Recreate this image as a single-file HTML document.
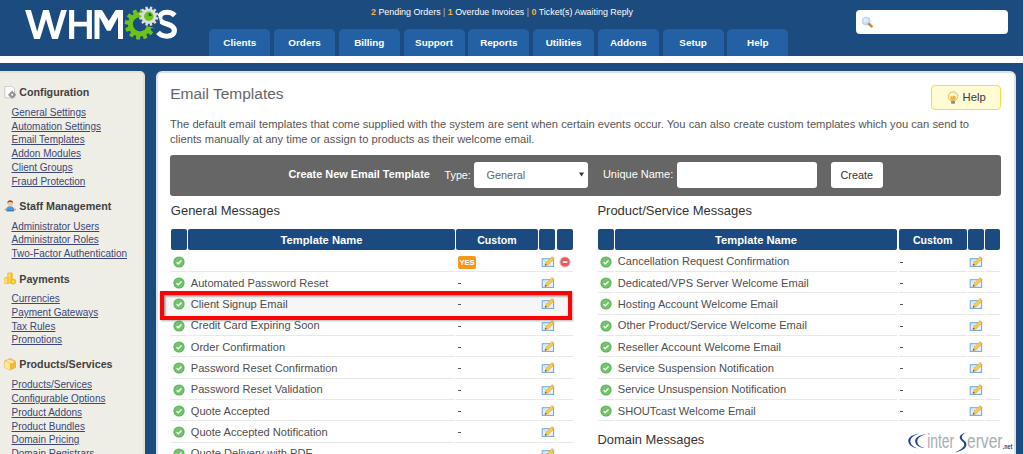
<!DOCTYPE html>
<html><head><meta charset="utf-8"><style>
html,body{margin:0;padding:0;width:1024px;height:454px;overflow:hidden;font-family:"Liberation Sans", sans-serif;}
body{position:relative;}
</style></head><body>
<div style="position:absolute;left:0.00px;top:0.00px;width:1024.00px;height:454.00px;background:#1c4b80"></div>
<div style="position:absolute;left:0.00px;top:55.70px;width:1024.00px;height:7.20px;background:#fff"></div>
<div style="position:absolute;left:1023.00px;top:0.00px;width:1.00px;height:454.00px;background:#c9d3de"></div>
<svg style="position:absolute;left:0;top:0" width="130" height="45" viewBox="0 0 130 45">
<path d="M25.1 9.9 L30.9 9.9 L37.2 31.8 L43.1 9.9 L48.9 9.9 L54.8 31.8 L61.1 9.9 L66.9 9.9 L57.9 38.9 L52.1 38.9 L46 19.3 L39.9 38.9 L34.1 38.9Z" fill="#fff"/>
<path d="M69.1 9.9 H74.2 V21.7 H86.8 V9.9 H91.9 V38.9 H86.8 V26.4 H74.2 V38.9 H69.1Z" fill="#fff"/>
<path d="M94.5 38.9 V9.9 H101.9 L108.75 21 L115.6 9.9 H123 V38.9 H118 V17 L110.6 30.7 H106.9 L99.5 17 V38.9Z" fill="#fff"/>
</svg>
<svg style="position:absolute;left:0;top:0" width="200" height="45" viewBox="0 0 200 45"><path d="M174.8 15.4 C172.8 13.3 170 12.3 166.8 12.3 C162.3 12.3 159.7 14.7 159.7 17.9 C159.7 21.6 163 22.8 167 24 C171.4 25.3 174.4 26.8 174.4 30.6 C174.4 34 171.4 36.2 166.8 36.2 C163.2 36.2 160.3 35 158 32.4" fill="none" stroke="#fff" stroke-width="5.1"/></svg>
<svg style="position:absolute;left:0;top:0" width="200" height="50" viewBox="0 0 200 50">
<path d="M151.99,23.84 L155.40,24.52 L154.86,28.34 L151.40,28.05 L150.61,29.90 L153.23,32.19 L150.85,35.23 L148.00,33.25 L146.39,34.45 L147.51,37.74 L143.93,39.19 L142.45,36.05 L140.46,36.29 L139.78,39.70 L135.96,39.16 L136.25,35.70 L134.40,34.91 L132.11,37.53 L129.07,35.15 L131.05,32.30 L129.85,30.69 L126.56,31.81 L125.11,28.23 L128.25,26.75 L128.01,24.76 L124.60,24.08 L125.14,20.26 L128.60,20.55 L129.39,18.70 L126.77,16.41 L129.15,13.37 L132.00,15.35 L133.61,14.15 L132.49,10.86 L136.07,9.41 L137.55,12.55 L139.54,12.31 L140.22,8.90 L144.04,9.44 L143.75,12.90 L145.60,13.69 L147.89,11.07 L150.93,13.45 L148.95,16.30 L150.15,17.91 L153.44,16.79 L154.89,20.37 L151.75,21.85Z" fill="#6dc21c"/>
<circle cx="140" cy="24.3" r="7.1" fill="#1c4b80"/>
<path d="M140.00,24.30 L143.47,4.60 L146.12,5.26 L148.66,6.27 L151.04,7.62 L153.21,9.28 L155.13,11.22 L156.77,13.41 L158.10,15.79 L159.09,18.34 L159.73,21.00 L159.99,23.72 L159.88,26.45 L159.41,29.14Z" fill="#1c4b80"/>
<path d="M156.37,16.88 L158.50,17.58 L157.89,19.86 L155.69,19.40 L155.02,20.57 L156.51,22.25 L154.85,23.91 L153.17,22.42 L152.00,23.09 L152.46,25.29 L150.18,25.90 L149.48,23.77 L148.12,23.77 L147.42,25.90 L145.14,25.29 L145.60,23.09 L144.43,22.42 L142.75,23.91 L141.09,22.25 L142.58,20.57 L141.91,19.40 L139.71,19.86 L139.10,17.58 L141.23,16.88 L141.23,15.52 L139.10,14.82 L139.71,12.54 L141.91,13.00 L142.58,11.83 L141.09,10.15 L142.75,8.49 L144.43,9.98 L145.60,9.31 L145.14,7.11 L147.42,6.50 L148.12,8.63 L149.48,8.63 L150.18,6.50 L152.46,7.11 L152.00,9.31 L153.17,9.98 L154.85,8.49 L156.51,10.15 L155.02,11.83 L155.69,13.00 L157.89,12.54 L158.50,14.82 L156.37,15.52Z" fill="#dcdcdc"/>
<circle cx="148.8" cy="16.2" r="4.7" fill="#6dc21c"/>
<path d="M148.80,16.20 L148.54,13.21 L148.91,13.20 L149.28,13.24 L149.64,13.32 L149.99,13.45 L150.32,13.61 L150.63,13.82 L150.91,14.06 L151.15,14.34 L151.36,14.64 L151.54,14.97 L151.67,15.32 L151.75,15.68Z" fill="#1c4b80"/>
</svg>
<div style="position:absolute;left:371.00px;top:7.77px;font-size:8.9px;line-height:8.9px;color:#fff;font-weight:normal;white-space:nowrap;"><b style="color:#f3b13a">2</b> Pending Orders <span style="color:#a9bbd3">|</span> <b style="color:#f3b13a">1</b> Overdue Invoices <span style="color:#a9bbd3">|</span> <b style="color:#f3b13a">0</b> Ticket(s) Awaiting Reply</div>
<div style="position:absolute;left:209.30px;top:28.80px;width:61.00px;height:27.00px;background:#2461a4;border-radius:5px 5px 0 0"></div>
<div style="position:absolute;left:209.30px;top:38.22px;width:61.00px;text-align:center;font-size:9.9px;line-height:9.9px;color:#fff;font-weight:bold;white-space:nowrap;">Clients</div>
<div style="position:absolute;left:274.05px;top:28.80px;width:61.00px;height:27.00px;background:#2461a4;border-radius:5px 5px 0 0"></div>
<div style="position:absolute;left:274.05px;top:38.22px;width:61.00px;text-align:center;font-size:9.9px;line-height:9.9px;color:#fff;font-weight:bold;white-space:nowrap;">Orders</div>
<div style="position:absolute;left:338.80px;top:28.80px;width:61.00px;height:27.00px;background:#2461a4;border-radius:5px 5px 0 0"></div>
<div style="position:absolute;left:338.80px;top:38.22px;width:61.00px;text-align:center;font-size:9.9px;line-height:9.9px;color:#fff;font-weight:bold;white-space:nowrap;">Billing</div>
<div style="position:absolute;left:403.55px;top:28.80px;width:61.00px;height:27.00px;background:#2461a4;border-radius:5px 5px 0 0"></div>
<div style="position:absolute;left:403.55px;top:38.22px;width:61.00px;text-align:center;font-size:9.9px;line-height:9.9px;color:#fff;font-weight:bold;white-space:nowrap;">Support</div>
<div style="position:absolute;left:468.30px;top:28.80px;width:61.00px;height:27.00px;background:#2461a4;border-radius:5px 5px 0 0"></div>
<div style="position:absolute;left:468.30px;top:38.22px;width:61.00px;text-align:center;font-size:9.9px;line-height:9.9px;color:#fff;font-weight:bold;white-space:nowrap;">Reports</div>
<div style="position:absolute;left:533.05px;top:28.80px;width:61.00px;height:27.00px;background:#2461a4;border-radius:5px 5px 0 0"></div>
<div style="position:absolute;left:533.05px;top:38.22px;width:61.00px;text-align:center;font-size:9.9px;line-height:9.9px;color:#fff;font-weight:bold;white-space:nowrap;">Utilities</div>
<div style="position:absolute;left:597.80px;top:28.80px;width:61.00px;height:27.00px;background:#2461a4;border-radius:5px 5px 0 0"></div>
<div style="position:absolute;left:597.80px;top:38.22px;width:61.00px;text-align:center;font-size:9.9px;line-height:9.9px;color:#fff;font-weight:bold;white-space:nowrap;">Addons</div>
<div style="position:absolute;left:662.55px;top:28.80px;width:61.00px;height:27.00px;background:#2461a4;border-radius:5px 5px 0 0"></div>
<div style="position:absolute;left:662.55px;top:38.22px;width:61.00px;text-align:center;font-size:9.9px;line-height:9.9px;color:#fff;font-weight:bold;white-space:nowrap;">Setup</div>
<div style="position:absolute;left:727.30px;top:28.80px;width:61.00px;height:27.00px;background:#2461a4;border-radius:5px 5px 0 0"></div>
<div style="position:absolute;left:727.30px;top:38.22px;width:61.00px;text-align:center;font-size:9.9px;line-height:9.9px;color:#fff;font-weight:bold;white-space:nowrap;">Help</div>
<div style="position:absolute;left:856.00px;top:10.00px;width:152.00px;height:24.00px;background:#fff;border-radius:4px"></div>
<svg style="position:absolute;left:861px;top:16px" width="14" height="13" viewBox="0 0 14 13">
<circle cx="5.2" cy="5" r="4" fill="#c9dff4" stroke="#b3cfea" stroke-width=".8"/>
<circle cx="4.4" cy="4.2" r="1.6" fill="#e3effa"/>
<path d="M8 8 L10.6 10.4" stroke="#c98945" stroke-width="2.6" stroke-linecap="round"/>
</svg>
<div style="position:absolute;left:-5.00px;top:71.00px;width:149.60px;height:400.00px;background:#efeee6;border:2px solid #e4e1cc;border-radius:5px;box-sizing:border-box"></div>
<div style="position:absolute;left:19.30px;top:87.34px;font-size:10.7px;line-height:10.7px;color:#404040;font-weight:bold;white-space:nowrap;">Configuration</div>
<svg style="position:absolute;left:4px;top:85.8px" width="13" height="13" viewBox="0 0 13 13"><path d="M0.8 0.3h7.2l2.6 2.6v8.9H0.8z" fill="#fbfbfb" stroke="#c4c4c4" stroke-width=".9"/><g transform="translate(8.2 8.7)"><circle r="3" fill="#8f8f8f"/><path d="M-.7 -3.9h1.4v7.8h-1.4z M-3.9 -.7h7.8v1.4h-7.8z" fill="#8f8f8f"/><circle r="1.1" fill="#f4f4f4"/></g></svg>
<div style="position:absolute;left:11.50px;top:107.94px;font-size:10.0px;line-height:10.0px;color:#3b4679;font-weight:normal;white-space:nowrap;text-decoration:underline">General Settings</div>
<div style="position:absolute;left:11.50px;top:121.66px;font-size:10.0px;line-height:10.0px;color:#3b4679;font-weight:normal;white-space:nowrap;text-decoration:underline">Automation Settings</div>
<div style="position:absolute;left:11.50px;top:135.38px;font-size:10.0px;line-height:10.0px;color:#3b4679;font-weight:normal;white-space:nowrap;text-decoration:underline">Email Templates</div>
<div style="position:absolute;left:11.50px;top:149.09px;font-size:10.0px;line-height:10.0px;color:#3b4679;font-weight:normal;white-space:nowrap;text-decoration:underline">Addon Modules</div>
<div style="position:absolute;left:11.50px;top:162.81px;font-size:10.0px;line-height:10.0px;color:#3b4679;font-weight:normal;white-space:nowrap;text-decoration:underline">Client Groups</div>
<div style="position:absolute;left:11.50px;top:176.53px;font-size:10.0px;line-height:10.0px;color:#3b4679;font-weight:normal;white-space:nowrap;text-decoration:underline">Fraud Protection</div>
<div style="position:absolute;left:19.30px;top:201.24px;font-size:10.7px;line-height:10.7px;color:#404040;font-weight:bold;white-space:nowrap;">Staff Management</div>
<svg style="position:absolute;left:4px;top:199.7px" width="13" height="13" viewBox="0 0 13 13"><path d="M2.2 9.8 Q2.2 6.5 6.2 6.3 Q10.2 6.5 10.3 9.8 L10 11.3 H2.6z" fill="#4b97e2"/><path d="M2.6 10.2 H10 L9.8 11.3 H2.8z" fill="#2d6fc0"/><circle cx="1.5" cy="9.4" r="1" fill="#e8a53a"/><circle cx="11" cy="9.4" r="1" fill="#e8a53a"/><circle cx="6.2" cy="3.6" r="2.7" fill="#f3c79b"/><path d="M3.4 3.4 Q3.3 0.3 6.2 0.3 Q9.1 0.3 9 3.4 Q8 1.8 6.2 2 Q4.4 1.8 3.4 3.4z" fill="#9a4a1a"/></svg>
<div style="position:absolute;left:11.50px;top:221.63px;font-size:10.0px;line-height:10.0px;color:#3b4679;font-weight:normal;white-space:nowrap;text-decoration:underline">Administrator Users</div>
<div style="position:absolute;left:11.50px;top:235.35px;font-size:10.0px;line-height:10.0px;color:#3b4679;font-weight:normal;white-space:nowrap;text-decoration:underline">Administrator Roles</div>
<div style="position:absolute;left:11.50px;top:249.08px;font-size:10.0px;line-height:10.0px;color:#3b4679;font-weight:normal;white-space:nowrap;text-decoration:underline">Two-Factor Authentication</div>
<div style="position:absolute;left:19.30px;top:273.74px;font-size:10.7px;line-height:10.7px;color:#404040;font-weight:bold;white-space:nowrap;">Payments</div>
<svg style="position:absolute;left:4px;top:272.2px" width="13" height="13" viewBox="0 0 13 13"><rect x="3.3" y="0.5" width="5.5" height="11" rx="1.2" fill="#f4bd2a"/><rect x="4.3" y="1.3" width="2.2" height="9" fill="#fbd86a"/><rect x="0.2" y="5" width="4.6" height="7" rx="1.2" fill="#f7c534"/><rect x="1" y="6" width="1.8" height="5" fill="#fde08a"/><circle cx="9.3" cy="9.6" r="2.9" fill="#f5bd24"/><circle cx="9.3" cy="9.6" r="1.2" fill="#fde08a"/></svg>
<div style="position:absolute;left:11.50px;top:294.24px;font-size:10.0px;line-height:10.0px;color:#3b4679;font-weight:normal;white-space:nowrap;text-decoration:underline">Currencies</div>
<div style="position:absolute;left:11.50px;top:307.96px;font-size:10.0px;line-height:10.0px;color:#3b4679;font-weight:normal;white-space:nowrap;text-decoration:underline">Payment Gateways</div>
<div style="position:absolute;left:11.50px;top:321.68px;font-size:10.0px;line-height:10.0px;color:#3b4679;font-weight:normal;white-space:nowrap;text-decoration:underline">Tax Rules</div>
<div style="position:absolute;left:11.50px;top:335.40px;font-size:10.0px;line-height:10.0px;color:#3b4679;font-weight:normal;white-space:nowrap;text-decoration:underline">Promotions</div>
<div style="position:absolute;left:19.30px;top:359.24px;font-size:10.7px;line-height:10.7px;color:#404040;font-weight:bold;white-space:nowrap;">Products/Services</div>
<svg style="position:absolute;left:4px;top:357.7px" width="13" height="13" viewBox="0 0 13 13"><path d="M6 0.6 L11.5 3.2 V9.4 L6 12 L0.5 9.4 V3.2z" fill="#f8dd7a" stroke="#e3a64a" stroke-width=".9"/><path d="M0.5 3.2 L6 5.9 L11.5 3.2 V9.4 L6 12z" fill="#f2b932"/><path d="M0.5 3.2 L6 5.9 V12 L0.5 9.4z" fill="#fbe7a0"/><path d="M3.2 1.9 L8.8 4.6" stroke="#fff3c8" stroke-width="1"/></svg>
<div style="position:absolute;left:11.50px;top:380.34px;font-size:10.0px;line-height:10.0px;color:#3b4679;font-weight:normal;white-space:nowrap;text-decoration:underline">Products/Services</div>
<div style="position:absolute;left:11.50px;top:394.06px;font-size:10.0px;line-height:10.0px;color:#3b4679;font-weight:normal;white-space:nowrap;text-decoration:underline">Configurable Options</div>
<div style="position:absolute;left:11.50px;top:407.78px;font-size:10.0px;line-height:10.0px;color:#3b4679;font-weight:normal;white-space:nowrap;text-decoration:underline">Product Addons</div>
<div style="position:absolute;left:11.50px;top:421.50px;font-size:10.0px;line-height:10.0px;color:#3b4679;font-weight:normal;white-space:nowrap;text-decoration:underline">Product Bundles</div>
<div style="position:absolute;left:11.50px;top:435.22px;font-size:10.0px;line-height:10.0px;color:#3b4679;font-weight:normal;white-space:nowrap;text-decoration:underline">Domain Pricing</div>
<div style="position:absolute;left:11.50px;top:448.94px;font-size:10.0px;line-height:10.0px;color:#3b4679;font-weight:normal;white-space:nowrap;text-decoration:underline">Domain Registrars</div>
<div style="position:absolute;left:155.50px;top:71.00px;width:860.20px;height:420.00px;background:#fff;border:2px solid #dde2e8;border-radius:6px;box-sizing:border-box"></div>
<div style="position:absolute;left:170.20px;top:85.88px;font-size:15.5px;line-height:15.5px;color:#666;font-weight:normal;white-space:nowrap;">Email Templates</div>
<div style="position:absolute;left:931.00px;top:85.20px;width:70.00px;height:24.40px;background:#fffcd4;border:1px solid #f7dc48;border-radius:4px;box-sizing:border-box"></div>
<svg style="position:absolute;left:947px;top:91px" width="12" height="14" viewBox="0 0 12 14">
<circle cx="6" cy="5.5" r="4.7" fill="#fdf2c8" stroke="#e9b655" stroke-width=".9"/>
<ellipse cx="6" cy="7" rx="2.8" ry="2.4" fill="#f2b73a"/>
<circle cx="5.2" cy="3.8" r="1.6" fill="#fffbea"/>
<rect x="4" y="9.8" width="4" height="3" rx=".8" fill="#8d8d8d"/>
</svg>
<div style="position:absolute;left:962.50px;top:92.13px;font-size:11.3px;line-height:11.3px;color:#3a3a3a;font-weight:normal;white-space:nowrap;">Help</div>
<div style="position:absolute;left:170.00px;top:118.72px;font-size:11.2px;line-height:11.2px;color:#555;font-weight:normal;white-space:nowrap;">The default email templates that come supplied with the system are sent when certain events occur. You can also create custom templates which you can send to</div>
<div style="position:absolute;left:170.00px;top:134.02px;font-size:11.2px;line-height:11.2px;color:#555;font-weight:normal;white-space:nowrap;">clients manually at any time or assign to products as their welcome email.</div>
<div style="position:absolute;left:170.00px;top:154.60px;width:831.00px;height:41.00px;background:#666;border-radius:3px"></div>
<div style="position:absolute;left:288.40px;top:169.37px;font-size:10.9px;line-height:10.9px;color:#fff;font-weight:bold;white-space:nowrap;">Create New Email Template</div>
<div style="position:absolute;left:444.60px;top:169.54px;font-size:10.7px;line-height:10.7px;color:#fff;font-weight:normal;white-space:nowrap;">Type:</div>
<div style="position:absolute;left:474.00px;top:162.30px;width:114.00px;height:25.70px;background:#fff;border-radius:3px"></div>
<div style="position:absolute;left:486.50px;top:169.77px;font-size:10.9px;line-height:10.9px;color:#666;font-weight:normal;white-space:nowrap;">General</div>
<svg style="position:absolute;left:579px;top:172px" width="5" height="5" viewBox="0 0 5 5"><path d="M0 .5H5L2.5 4.5z" fill="#333"/></svg>
<div style="position:absolute;left:602.90px;top:169.29px;font-size:11.0px;line-height:11.0px;color:#fff;font-weight:normal;white-space:nowrap;">Unique Name:</div>
<div style="position:absolute;left:677.00px;top:162.30px;width:139.70px;height:25.70px;background:#fff;border-radius:3px"></div>
<div style="position:absolute;left:830.50px;top:162.30px;width:52.50px;height:25.70px;background:#fff;border-radius:3px"></div>
<div style="position:absolute;left:840.50px;top:169.86px;font-size:10.8px;line-height:10.8px;color:#333;font-weight:normal;white-space:nowrap;">Create</div>
<div style="position:absolute;left:164.10px;top:294.30px;width:404.40px;height:21.60px;background:#f6f6f6"></div>
<div style="position:absolute;left:170.80px;top:204.20px;font-size:13.0px;line-height:13.0px;color:#333;font-weight:normal;white-space:nowrap;">General Messages</div>
<div style="position:absolute;left:170.80px;top:229.20px;width:16.00px;height:20.80px;background:#1a4a80;border-radius:2px"></div>
<div style="position:absolute;left:188.10px;top:229.20px;width:266.80px;height:20.80px;background:#1a4a80;border-radius:2px"></div>
<div style="position:absolute;left:456.00px;top:229.20px;width:81.80px;height:20.80px;background:#1a4a80;border-radius:2px"></div>
<div style="position:absolute;left:539.10px;top:229.20px;width:16.20px;height:20.80px;background:#1a4a80;border-radius:2px"></div>
<div style="position:absolute;left:557.00px;top:229.20px;width:16.00px;height:20.80px;background:#1a4a80;border-radius:2px"></div>
<div style="position:absolute;left:188.10px;top:235.02px;width:266.80px;text-align:center;font-size:11.2px;line-height:11.2px;color:#fff;font-weight:bold;white-space:nowrap;">Template Name</div>
<div style="position:absolute;left:456.00px;top:235.03px;width:81.80px;text-align:center;font-size:10.6px;line-height:10.6px;color:#fff;font-weight:bold;white-space:nowrap;">Custom</div>
<div style="position:absolute;left:170.80px;top:271.00px;width:16.00px;height:1.00px;background:#e8e8e8"></div>
<div style="position:absolute;left:188.10px;top:271.00px;width:266.80px;height:1.00px;background:#e8e8e8"></div>
<div style="position:absolute;left:456.00px;top:271.00px;width:81.80px;height:1.00px;background:#e8e8e8"></div>
<div style="position:absolute;left:539.10px;top:271.00px;width:16.20px;height:1.00px;background:#e8e8e8"></div>
<div style="position:absolute;left:557.00px;top:271.00px;width:16.00px;height:1.00px;background:#e8e8e8"></div>
<svg style="position:absolute;left:173.10px;top:255.80px" width="12" height="12" viewBox="0 0 12 12"><circle cx="6" cy="6" r="5.6" fill="#58b055"/><circle cx="6" cy="6" r="4.7" fill="#72c46c"/><path d="M3.6 6.3 L5.3 7.8 L8.5 4.6" fill="none" stroke="#fff" stroke-width="1.4"/></svg>
<div style="position:absolute;left:458.20px;top:255.90px;width:17.60px;height:12.90px;background:#f7971d;border-radius:2px"></div>
<div style="position:absolute;left:458.20px;top:259.17px;width:17.60px;text-align:center;font-size:7.6px;line-height:7.6px;color:#fff;font-weight:bold;white-space:nowrap;letter-spacing:-0.1px">YES</div>
<svg style="position:absolute;left:540.50px;top:255.80px" width="14" height="13" viewBox="0 0 14 13"><rect x="1.2" y="2.7" width="11.4" height="7.7" fill="#e4f1fc" stroke="#6ea3da" stroke-width="1"/><path d="M1.5 3 L6.9 7.3 L12.3 3" fill="none" stroke="#a9cdf0" stroke-width=".7"/><path d="M3.9 9.6 L4.9 6.6 L10.6 1 L12.8 3.1 L7.1 8.7z" fill="#f4cf4c" stroke="#d59a32" stroke-width=".6"/><path d="M10.6 1 L11.4 0.3 L13.5 2.4 L12.8 3.1z" fill="#f0a878"/><path d="M3.9 9.6 L4.5 7.8 L5.8 9z" fill="#6b3a18"/></svg>
<svg style="position:absolute;left:559.00px;top:255.80px" width="12" height="12" viewBox="0 0 12 12"><circle cx="6" cy="6" r="5.1" fill="#e65a5c" stroke="#f4bcbc" stroke-width="1"/><rect x="3.7" y="5.2" width="4.6" height="1.7" fill="#fff"/></svg>
<div style="position:absolute;left:170.80px;top:292.00px;width:16.00px;height:1.00px;background:#e8e8e8"></div>
<div style="position:absolute;left:188.10px;top:292.00px;width:266.80px;height:1.00px;background:#e8e8e8"></div>
<div style="position:absolute;left:456.00px;top:292.00px;width:81.80px;height:1.00px;background:#e8e8e8"></div>
<div style="position:absolute;left:539.10px;top:292.00px;width:16.20px;height:1.00px;background:#e8e8e8"></div>
<div style="position:absolute;left:557.00px;top:292.00px;width:16.00px;height:1.00px;background:#e8e8e8"></div>
<svg style="position:absolute;left:173.10px;top:277.13px" width="12" height="12" viewBox="0 0 12 12"><circle cx="6" cy="6" r="5.6" fill="#58b055"/><circle cx="6" cy="6" r="4.7" fill="#72c46c"/><path d="M3.6 6.3 L5.3 7.8 L8.5 4.6" fill="none" stroke="#fff" stroke-width="1.4"/></svg>
<div style="position:absolute;left:190.80px;top:277.53px;font-size:11.1px;line-height:11.1px;color:#4e4e4e;font-weight:normal;white-space:nowrap;">Automated Password Reset</div>
<div style="position:absolute;left:458.00px;top:283.00px;width:3.00px;height:1.00px;background:#555"></div>
<svg style="position:absolute;left:540.50px;top:277.13px" width="14" height="13" viewBox="0 0 14 13"><rect x="1.2" y="2.7" width="11.4" height="7.7" fill="#e4f1fc" stroke="#6ea3da" stroke-width="1"/><path d="M1.5 3 L6.9 7.3 L12.3 3" fill="none" stroke="#a9cdf0" stroke-width=".7"/><path d="M3.9 9.6 L4.9 6.6 L10.6 1 L12.8 3.1 L7.1 8.7z" fill="#f4cf4c" stroke="#d59a32" stroke-width=".6"/><path d="M10.6 1 L11.4 0.3 L13.5 2.4 L12.8 3.1z" fill="#f0a878"/><path d="M3.9 9.6 L4.5 7.8 L5.8 9z" fill="#6b3a18"/></svg>
<svg style="position:absolute;left:173.10px;top:298.46px" width="12" height="12" viewBox="0 0 12 12"><circle cx="6" cy="6" r="5.6" fill="#58b055"/><circle cx="6" cy="6" r="4.7" fill="#72c46c"/><path d="M3.6 6.3 L5.3 7.8 L8.5 4.6" fill="none" stroke="#fff" stroke-width="1.4"/></svg>
<div style="position:absolute;left:190.80px;top:298.86px;font-size:11.1px;line-height:11.1px;color:#4e4e4e;font-weight:normal;white-space:nowrap;">Client Signup Email</div>
<div style="position:absolute;left:458.00px;top:304.00px;width:3.00px;height:1.00px;background:#555"></div>
<svg style="position:absolute;left:540.50px;top:298.46px" width="14" height="13" viewBox="0 0 14 13"><rect x="1.2" y="2.7" width="11.4" height="7.7" fill="#e4f1fc" stroke="#6ea3da" stroke-width="1"/><path d="M1.5 3 L6.9 7.3 L12.3 3" fill="none" stroke="#a9cdf0" stroke-width=".7"/><path d="M3.9 9.6 L4.9 6.6 L10.6 1 L12.8 3.1 L7.1 8.7z" fill="#f4cf4c" stroke="#d59a32" stroke-width=".6"/><path d="M10.6 1 L11.4 0.3 L13.5 2.4 L12.8 3.1z" fill="#f0a878"/><path d="M3.9 9.6 L4.5 7.8 L5.8 9z" fill="#6b3a18"/></svg>
<div style="position:absolute;left:170.80px;top:335.00px;width:16.00px;height:1.00px;background:#e8e8e8"></div>
<div style="position:absolute;left:188.10px;top:335.00px;width:266.80px;height:1.00px;background:#e8e8e8"></div>
<div style="position:absolute;left:456.00px;top:335.00px;width:81.80px;height:1.00px;background:#e8e8e8"></div>
<div style="position:absolute;left:539.10px;top:335.00px;width:16.20px;height:1.00px;background:#e8e8e8"></div>
<div style="position:absolute;left:557.00px;top:335.00px;width:16.00px;height:1.00px;background:#e8e8e8"></div>
<svg style="position:absolute;left:173.10px;top:319.79px" width="12" height="12" viewBox="0 0 12 12"><circle cx="6" cy="6" r="5.6" fill="#58b055"/><circle cx="6" cy="6" r="4.7" fill="#72c46c"/><path d="M3.6 6.3 L5.3 7.8 L8.5 4.6" fill="none" stroke="#fff" stroke-width="1.4"/></svg>
<div style="position:absolute;left:190.80px;top:320.19px;font-size:11.1px;line-height:11.1px;color:#4e4e4e;font-weight:normal;white-space:nowrap;">Credit Card Expiring Soon</div>
<div style="position:absolute;left:458.00px;top:326.00px;width:3.00px;height:1.00px;background:#555"></div>
<svg style="position:absolute;left:540.50px;top:319.79px" width="14" height="13" viewBox="0 0 14 13"><rect x="1.2" y="2.7" width="11.4" height="7.7" fill="#e4f1fc" stroke="#6ea3da" stroke-width="1"/><path d="M1.5 3 L6.9 7.3 L12.3 3" fill="none" stroke="#a9cdf0" stroke-width=".7"/><path d="M3.9 9.6 L4.9 6.6 L10.6 1 L12.8 3.1 L7.1 8.7z" fill="#f4cf4c" stroke="#d59a32" stroke-width=".6"/><path d="M10.6 1 L11.4 0.3 L13.5 2.4 L12.8 3.1z" fill="#f0a878"/><path d="M3.9 9.6 L4.5 7.8 L5.8 9z" fill="#6b3a18"/></svg>
<div style="position:absolute;left:170.80px;top:356.00px;width:16.00px;height:1.00px;background:#e8e8e8"></div>
<div style="position:absolute;left:188.10px;top:356.00px;width:266.80px;height:1.00px;background:#e8e8e8"></div>
<div style="position:absolute;left:456.00px;top:356.00px;width:81.80px;height:1.00px;background:#e8e8e8"></div>
<div style="position:absolute;left:539.10px;top:356.00px;width:16.20px;height:1.00px;background:#e8e8e8"></div>
<div style="position:absolute;left:557.00px;top:356.00px;width:16.00px;height:1.00px;background:#e8e8e8"></div>
<svg style="position:absolute;left:173.10px;top:341.12px" width="12" height="12" viewBox="0 0 12 12"><circle cx="6" cy="6" r="5.6" fill="#58b055"/><circle cx="6" cy="6" r="4.7" fill="#72c46c"/><path d="M3.6 6.3 L5.3 7.8 L8.5 4.6" fill="none" stroke="#fff" stroke-width="1.4"/></svg>
<div style="position:absolute;left:190.80px;top:341.52px;font-size:11.1px;line-height:11.1px;color:#4e4e4e;font-weight:normal;white-space:nowrap;">Order Confirmation</div>
<div style="position:absolute;left:458.00px;top:347.00px;width:3.00px;height:1.00px;background:#555"></div>
<svg style="position:absolute;left:540.50px;top:341.12px" width="14" height="13" viewBox="0 0 14 13"><rect x="1.2" y="2.7" width="11.4" height="7.7" fill="#e4f1fc" stroke="#6ea3da" stroke-width="1"/><path d="M1.5 3 L6.9 7.3 L12.3 3" fill="none" stroke="#a9cdf0" stroke-width=".7"/><path d="M3.9 9.6 L4.9 6.6 L10.6 1 L12.8 3.1 L7.1 8.7z" fill="#f4cf4c" stroke="#d59a32" stroke-width=".6"/><path d="M10.6 1 L11.4 0.3 L13.5 2.4 L12.8 3.1z" fill="#f0a878"/><path d="M3.9 9.6 L4.5 7.8 L5.8 9z" fill="#6b3a18"/></svg>
<div style="position:absolute;left:170.80px;top:378.00px;width:16.00px;height:1.00px;background:#e8e8e8"></div>
<div style="position:absolute;left:188.10px;top:378.00px;width:266.80px;height:1.00px;background:#e8e8e8"></div>
<div style="position:absolute;left:456.00px;top:378.00px;width:81.80px;height:1.00px;background:#e8e8e8"></div>
<div style="position:absolute;left:539.10px;top:378.00px;width:16.20px;height:1.00px;background:#e8e8e8"></div>
<div style="position:absolute;left:557.00px;top:378.00px;width:16.00px;height:1.00px;background:#e8e8e8"></div>
<svg style="position:absolute;left:173.10px;top:362.45px" width="12" height="12" viewBox="0 0 12 12"><circle cx="6" cy="6" r="5.6" fill="#58b055"/><circle cx="6" cy="6" r="4.7" fill="#72c46c"/><path d="M3.6 6.3 L5.3 7.8 L8.5 4.6" fill="none" stroke="#fff" stroke-width="1.4"/></svg>
<div style="position:absolute;left:190.80px;top:362.85px;font-size:11.1px;line-height:11.1px;color:#4e4e4e;font-weight:normal;white-space:nowrap;">Password Reset Confirmation</div>
<div style="position:absolute;left:458.00px;top:368.00px;width:3.00px;height:1.00px;background:#555"></div>
<svg style="position:absolute;left:540.50px;top:362.45px" width="14" height="13" viewBox="0 0 14 13"><rect x="1.2" y="2.7" width="11.4" height="7.7" fill="#e4f1fc" stroke="#6ea3da" stroke-width="1"/><path d="M1.5 3 L6.9 7.3 L12.3 3" fill="none" stroke="#a9cdf0" stroke-width=".7"/><path d="M3.9 9.6 L4.9 6.6 L10.6 1 L12.8 3.1 L7.1 8.7z" fill="#f4cf4c" stroke="#d59a32" stroke-width=".6"/><path d="M10.6 1 L11.4 0.3 L13.5 2.4 L12.8 3.1z" fill="#f0a878"/><path d="M3.9 9.6 L4.5 7.8 L5.8 9z" fill="#6b3a18"/></svg>
<div style="position:absolute;left:170.80px;top:399.00px;width:16.00px;height:1.00px;background:#e8e8e8"></div>
<div style="position:absolute;left:188.10px;top:399.00px;width:266.80px;height:1.00px;background:#e8e8e8"></div>
<div style="position:absolute;left:456.00px;top:399.00px;width:81.80px;height:1.00px;background:#e8e8e8"></div>
<div style="position:absolute;left:539.10px;top:399.00px;width:16.20px;height:1.00px;background:#e8e8e8"></div>
<div style="position:absolute;left:557.00px;top:399.00px;width:16.00px;height:1.00px;background:#e8e8e8"></div>
<svg style="position:absolute;left:173.10px;top:383.78px" width="12" height="12" viewBox="0 0 12 12"><circle cx="6" cy="6" r="5.6" fill="#58b055"/><circle cx="6" cy="6" r="4.7" fill="#72c46c"/><path d="M3.6 6.3 L5.3 7.8 L8.5 4.6" fill="none" stroke="#fff" stroke-width="1.4"/></svg>
<div style="position:absolute;left:190.80px;top:384.18px;font-size:11.1px;line-height:11.1px;color:#4e4e4e;font-weight:normal;white-space:nowrap;">Password Reset Validation</div>
<div style="position:absolute;left:458.00px;top:390.00px;width:3.00px;height:1.00px;background:#555"></div>
<svg style="position:absolute;left:540.50px;top:383.78px" width="14" height="13" viewBox="0 0 14 13"><rect x="1.2" y="2.7" width="11.4" height="7.7" fill="#e4f1fc" stroke="#6ea3da" stroke-width="1"/><path d="M1.5 3 L6.9 7.3 L12.3 3" fill="none" stroke="#a9cdf0" stroke-width=".7"/><path d="M3.9 9.6 L4.9 6.6 L10.6 1 L12.8 3.1 L7.1 8.7z" fill="#f4cf4c" stroke="#d59a32" stroke-width=".6"/><path d="M10.6 1 L11.4 0.3 L13.5 2.4 L12.8 3.1z" fill="#f0a878"/><path d="M3.9 9.6 L4.5 7.8 L5.8 9z" fill="#6b3a18"/></svg>
<div style="position:absolute;left:170.80px;top:420.00px;width:16.00px;height:1.00px;background:#e8e8e8"></div>
<div style="position:absolute;left:188.10px;top:420.00px;width:266.80px;height:1.00px;background:#e8e8e8"></div>
<div style="position:absolute;left:456.00px;top:420.00px;width:81.80px;height:1.00px;background:#e8e8e8"></div>
<div style="position:absolute;left:539.10px;top:420.00px;width:16.20px;height:1.00px;background:#e8e8e8"></div>
<div style="position:absolute;left:557.00px;top:420.00px;width:16.00px;height:1.00px;background:#e8e8e8"></div>
<svg style="position:absolute;left:173.10px;top:405.11px" width="12" height="12" viewBox="0 0 12 12"><circle cx="6" cy="6" r="5.6" fill="#58b055"/><circle cx="6" cy="6" r="4.7" fill="#72c46c"/><path d="M3.6 6.3 L5.3 7.8 L8.5 4.6" fill="none" stroke="#fff" stroke-width="1.4"/></svg>
<div style="position:absolute;left:190.80px;top:405.51px;font-size:11.1px;line-height:11.1px;color:#4e4e4e;font-weight:normal;white-space:nowrap;">Quote Accepted</div>
<div style="position:absolute;left:458.00px;top:411.00px;width:3.00px;height:1.00px;background:#555"></div>
<svg style="position:absolute;left:540.50px;top:405.11px" width="14" height="13" viewBox="0 0 14 13"><rect x="1.2" y="2.7" width="11.4" height="7.7" fill="#e4f1fc" stroke="#6ea3da" stroke-width="1"/><path d="M1.5 3 L6.9 7.3 L12.3 3" fill="none" stroke="#a9cdf0" stroke-width=".7"/><path d="M3.9 9.6 L4.9 6.6 L10.6 1 L12.8 3.1 L7.1 8.7z" fill="#f4cf4c" stroke="#d59a32" stroke-width=".6"/><path d="M10.6 1 L11.4 0.3 L13.5 2.4 L12.8 3.1z" fill="#f0a878"/><path d="M3.9 9.6 L4.5 7.8 L5.8 9z" fill="#6b3a18"/></svg>
<div style="position:absolute;left:170.80px;top:442.00px;width:16.00px;height:1.00px;background:#e8e8e8"></div>
<div style="position:absolute;left:188.10px;top:442.00px;width:266.80px;height:1.00px;background:#e8e8e8"></div>
<div style="position:absolute;left:456.00px;top:442.00px;width:81.80px;height:1.00px;background:#e8e8e8"></div>
<div style="position:absolute;left:539.10px;top:442.00px;width:16.20px;height:1.00px;background:#e8e8e8"></div>
<div style="position:absolute;left:557.00px;top:442.00px;width:16.00px;height:1.00px;background:#e8e8e8"></div>
<svg style="position:absolute;left:173.10px;top:426.44px" width="12" height="12" viewBox="0 0 12 12"><circle cx="6" cy="6" r="5.6" fill="#58b055"/><circle cx="6" cy="6" r="4.7" fill="#72c46c"/><path d="M3.6 6.3 L5.3 7.8 L8.5 4.6" fill="none" stroke="#fff" stroke-width="1.4"/></svg>
<div style="position:absolute;left:190.80px;top:426.84px;font-size:11.1px;line-height:11.1px;color:#4e4e4e;font-weight:normal;white-space:nowrap;">Quote Accepted Notification</div>
<div style="position:absolute;left:458.00px;top:432.00px;width:3.00px;height:1.00px;background:#555"></div>
<svg style="position:absolute;left:540.50px;top:426.44px" width="14" height="13" viewBox="0 0 14 13"><rect x="1.2" y="2.7" width="11.4" height="7.7" fill="#e4f1fc" stroke="#6ea3da" stroke-width="1"/><path d="M1.5 3 L6.9 7.3 L12.3 3" fill="none" stroke="#a9cdf0" stroke-width=".7"/><path d="M3.9 9.6 L4.9 6.6 L10.6 1 L12.8 3.1 L7.1 8.7z" fill="#f4cf4c" stroke="#d59a32" stroke-width=".6"/><path d="M10.6 1 L11.4 0.3 L13.5 2.4 L12.8 3.1z" fill="#f0a878"/><path d="M3.9 9.6 L4.5 7.8 L5.8 9z" fill="#6b3a18"/></svg>
<svg style="position:absolute;left:173.10px;top:447.77px" width="12" height="12" viewBox="0 0 12 12"><circle cx="6" cy="6" r="5.6" fill="#58b055"/><circle cx="6" cy="6" r="4.7" fill="#72c46c"/><path d="M3.6 6.3 L5.3 7.8 L8.5 4.6" fill="none" stroke="#fff" stroke-width="1.4"/></svg>
<div style="position:absolute;left:190.80px;top:448.17px;font-size:11.1px;line-height:11.1px;color:#4e4e4e;font-weight:normal;white-space:nowrap;">Quote Delivery with PDF</div>
<div style="position:absolute;left:458.00px;top:454.00px;width:3.00px;height:1.00px;background:#555"></div>
<svg style="position:absolute;left:540.50px;top:447.77px" width="14" height="13" viewBox="0 0 14 13"><rect x="1.2" y="2.7" width="11.4" height="7.7" fill="#e4f1fc" stroke="#6ea3da" stroke-width="1"/><path d="M1.5 3 L6.9 7.3 L12.3 3" fill="none" stroke="#a9cdf0" stroke-width=".7"/><path d="M3.9 9.6 L4.9 6.6 L10.6 1 L12.8 3.1 L7.1 8.7z" fill="#f4cf4c" stroke="#d59a32" stroke-width=".6"/><path d="M10.6 1 L11.4 0.3 L13.5 2.4 L12.8 3.1z" fill="#f0a878"/><path d="M3.9 9.6 L4.5 7.8 L5.8 9z" fill="#6b3a18"/></svg>
<div style="position:absolute;left:160.00px;top:290.50px;width:412.30px;height:29.20px;border:4px solid #fa0505;box-sizing:border-box;box-shadow:inset 1.5px 1.5px 2px rgba(0,0,0,.4), 1px 1px 2px rgba(0,0,0,.3)"></div>
<div style="position:absolute;left:597.40px;top:204.20px;font-size:13.0px;line-height:13.0px;color:#333;font-weight:normal;white-space:nowrap;">Product/Service Messages</div>
<div style="position:absolute;left:597.80px;top:229.20px;width:16.20px;height:20.80px;background:#1a4a80;border-radius:2px"></div>
<div style="position:absolute;left:615.10px;top:229.20px;width:281.90px;height:20.80px;background:#1a4a80;border-radius:2px"></div>
<div style="position:absolute;left:898.70px;top:229.20px;width:68.00px;height:20.80px;background:#1a4a80;border-radius:2px"></div>
<div style="position:absolute;left:968.00px;top:229.20px;width:16.00px;height:20.80px;background:#1a4a80;border-radius:2px"></div>
<div style="position:absolute;left:985.20px;top:229.20px;width:14.80px;height:20.80px;background:#1a4a80;border-radius:2px"></div>
<div style="position:absolute;left:615.10px;top:235.02px;width:281.90px;text-align:center;font-size:11.2px;line-height:11.2px;color:#fff;font-weight:bold;white-space:nowrap;">Template Name</div>
<div style="position:absolute;left:898.70px;top:235.03px;width:68.00px;text-align:center;font-size:10.6px;line-height:10.6px;color:#fff;font-weight:bold;white-space:nowrap;">Custom</div>
<div style="position:absolute;left:597.80px;top:271.00px;width:16.20px;height:1.00px;background:#e8e8e8"></div>
<div style="position:absolute;left:615.10px;top:271.00px;width:281.90px;height:1.00px;background:#e8e8e8"></div>
<div style="position:absolute;left:898.70px;top:271.00px;width:68.00px;height:1.00px;background:#e8e8e8"></div>
<div style="position:absolute;left:968.00px;top:271.00px;width:16.00px;height:1.00px;background:#e8e8e8"></div>
<div style="position:absolute;left:985.20px;top:271.00px;width:14.80px;height:1.00px;background:#e8e8e8"></div>
<svg style="position:absolute;left:600.20px;top:255.80px" width="12" height="12" viewBox="0 0 12 12"><circle cx="6" cy="6" r="5.6" fill="#58b055"/><circle cx="6" cy="6" r="4.7" fill="#72c46c"/><path d="M3.6 6.3 L5.3 7.8 L8.5 4.6" fill="none" stroke="#fff" stroke-width="1.4"/></svg>
<div style="position:absolute;left:617.80px;top:256.20px;font-size:11.1px;line-height:11.1px;color:#4e4e4e;font-weight:normal;white-space:nowrap;">Cancellation Request Confirmation</div>
<div style="position:absolute;left:900.00px;top:262.00px;width:3.00px;height:1.00px;background:#555"></div>
<svg style="position:absolute;left:969.30px;top:255.80px" width="14" height="13" viewBox="0 0 14 13"><rect x="1.2" y="2.7" width="11.4" height="7.7" fill="#e4f1fc" stroke="#6ea3da" stroke-width="1"/><path d="M1.5 3 L6.9 7.3 L12.3 3" fill="none" stroke="#a9cdf0" stroke-width=".7"/><path d="M3.9 9.6 L4.9 6.6 L10.6 1 L12.8 3.1 L7.1 8.7z" fill="#f4cf4c" stroke="#d59a32" stroke-width=".6"/><path d="M10.6 1 L11.4 0.3 L13.5 2.4 L12.8 3.1z" fill="#f0a878"/><path d="M3.9 9.6 L4.5 7.8 L5.8 9z" fill="#6b3a18"/></svg>
<div style="position:absolute;left:597.80px;top:292.00px;width:16.20px;height:1.00px;background:#e8e8e8"></div>
<div style="position:absolute;left:615.10px;top:292.00px;width:281.90px;height:1.00px;background:#e8e8e8"></div>
<div style="position:absolute;left:898.70px;top:292.00px;width:68.00px;height:1.00px;background:#e8e8e8"></div>
<div style="position:absolute;left:968.00px;top:292.00px;width:16.00px;height:1.00px;background:#e8e8e8"></div>
<div style="position:absolute;left:985.20px;top:292.00px;width:14.80px;height:1.00px;background:#e8e8e8"></div>
<svg style="position:absolute;left:600.20px;top:277.13px" width="12" height="12" viewBox="0 0 12 12"><circle cx="6" cy="6" r="5.6" fill="#58b055"/><circle cx="6" cy="6" r="4.7" fill="#72c46c"/><path d="M3.6 6.3 L5.3 7.8 L8.5 4.6" fill="none" stroke="#fff" stroke-width="1.4"/></svg>
<div style="position:absolute;left:617.80px;top:277.53px;font-size:11.1px;line-height:11.1px;color:#4e4e4e;font-weight:normal;white-space:nowrap;">Dedicated/VPS Server Welcome Email</div>
<div style="position:absolute;left:900.00px;top:283.00px;width:3.00px;height:1.00px;background:#555"></div>
<svg style="position:absolute;left:969.30px;top:277.13px" width="14" height="13" viewBox="0 0 14 13"><rect x="1.2" y="2.7" width="11.4" height="7.7" fill="#e4f1fc" stroke="#6ea3da" stroke-width="1"/><path d="M1.5 3 L6.9 7.3 L12.3 3" fill="none" stroke="#a9cdf0" stroke-width=".7"/><path d="M3.9 9.6 L4.9 6.6 L10.6 1 L12.8 3.1 L7.1 8.7z" fill="#f4cf4c" stroke="#d59a32" stroke-width=".6"/><path d="M10.6 1 L11.4 0.3 L13.5 2.4 L12.8 3.1z" fill="#f0a878"/><path d="M3.9 9.6 L4.5 7.8 L5.8 9z" fill="#6b3a18"/></svg>
<div style="position:absolute;left:597.80px;top:314.00px;width:16.20px;height:1.00px;background:#e8e8e8"></div>
<div style="position:absolute;left:615.10px;top:314.00px;width:281.90px;height:1.00px;background:#e8e8e8"></div>
<div style="position:absolute;left:898.70px;top:314.00px;width:68.00px;height:1.00px;background:#e8e8e8"></div>
<div style="position:absolute;left:968.00px;top:314.00px;width:16.00px;height:1.00px;background:#e8e8e8"></div>
<div style="position:absolute;left:985.20px;top:314.00px;width:14.80px;height:1.00px;background:#e8e8e8"></div>
<svg style="position:absolute;left:600.20px;top:298.46px" width="12" height="12" viewBox="0 0 12 12"><circle cx="6" cy="6" r="5.6" fill="#58b055"/><circle cx="6" cy="6" r="4.7" fill="#72c46c"/><path d="M3.6 6.3 L5.3 7.8 L8.5 4.6" fill="none" stroke="#fff" stroke-width="1.4"/></svg>
<div style="position:absolute;left:617.80px;top:298.86px;font-size:11.1px;line-height:11.1px;color:#4e4e4e;font-weight:normal;white-space:nowrap;">Hosting Account Welcome Email</div>
<div style="position:absolute;left:900.00px;top:304.00px;width:3.00px;height:1.00px;background:#555"></div>
<svg style="position:absolute;left:969.30px;top:298.46px" width="14" height="13" viewBox="0 0 14 13"><rect x="1.2" y="2.7" width="11.4" height="7.7" fill="#e4f1fc" stroke="#6ea3da" stroke-width="1"/><path d="M1.5 3 L6.9 7.3 L12.3 3" fill="none" stroke="#a9cdf0" stroke-width=".7"/><path d="M3.9 9.6 L4.9 6.6 L10.6 1 L12.8 3.1 L7.1 8.7z" fill="#f4cf4c" stroke="#d59a32" stroke-width=".6"/><path d="M10.6 1 L11.4 0.3 L13.5 2.4 L12.8 3.1z" fill="#f0a878"/><path d="M3.9 9.6 L4.5 7.8 L5.8 9z" fill="#6b3a18"/></svg>
<div style="position:absolute;left:597.80px;top:335.00px;width:16.20px;height:1.00px;background:#e8e8e8"></div>
<div style="position:absolute;left:615.10px;top:335.00px;width:281.90px;height:1.00px;background:#e8e8e8"></div>
<div style="position:absolute;left:898.70px;top:335.00px;width:68.00px;height:1.00px;background:#e8e8e8"></div>
<div style="position:absolute;left:968.00px;top:335.00px;width:16.00px;height:1.00px;background:#e8e8e8"></div>
<div style="position:absolute;left:985.20px;top:335.00px;width:14.80px;height:1.00px;background:#e8e8e8"></div>
<svg style="position:absolute;left:600.20px;top:319.79px" width="12" height="12" viewBox="0 0 12 12"><circle cx="6" cy="6" r="5.6" fill="#58b055"/><circle cx="6" cy="6" r="4.7" fill="#72c46c"/><path d="M3.6 6.3 L5.3 7.8 L8.5 4.6" fill="none" stroke="#fff" stroke-width="1.4"/></svg>
<div style="position:absolute;left:617.80px;top:320.19px;font-size:11.1px;line-height:11.1px;color:#4e4e4e;font-weight:normal;white-space:nowrap;">Other Product/Service Welcome Email</div>
<div style="position:absolute;left:900.00px;top:326.00px;width:3.00px;height:1.00px;background:#555"></div>
<svg style="position:absolute;left:969.30px;top:319.79px" width="14" height="13" viewBox="0 0 14 13"><rect x="1.2" y="2.7" width="11.4" height="7.7" fill="#e4f1fc" stroke="#6ea3da" stroke-width="1"/><path d="M1.5 3 L6.9 7.3 L12.3 3" fill="none" stroke="#a9cdf0" stroke-width=".7"/><path d="M3.9 9.6 L4.9 6.6 L10.6 1 L12.8 3.1 L7.1 8.7z" fill="#f4cf4c" stroke="#d59a32" stroke-width=".6"/><path d="M10.6 1 L11.4 0.3 L13.5 2.4 L12.8 3.1z" fill="#f0a878"/><path d="M3.9 9.6 L4.5 7.8 L5.8 9z" fill="#6b3a18"/></svg>
<div style="position:absolute;left:597.80px;top:356.00px;width:16.20px;height:1.00px;background:#e8e8e8"></div>
<div style="position:absolute;left:615.10px;top:356.00px;width:281.90px;height:1.00px;background:#e8e8e8"></div>
<div style="position:absolute;left:898.70px;top:356.00px;width:68.00px;height:1.00px;background:#e8e8e8"></div>
<div style="position:absolute;left:968.00px;top:356.00px;width:16.00px;height:1.00px;background:#e8e8e8"></div>
<div style="position:absolute;left:985.20px;top:356.00px;width:14.80px;height:1.00px;background:#e8e8e8"></div>
<svg style="position:absolute;left:600.20px;top:341.12px" width="12" height="12" viewBox="0 0 12 12"><circle cx="6" cy="6" r="5.6" fill="#58b055"/><circle cx="6" cy="6" r="4.7" fill="#72c46c"/><path d="M3.6 6.3 L5.3 7.8 L8.5 4.6" fill="none" stroke="#fff" stroke-width="1.4"/></svg>
<div style="position:absolute;left:617.80px;top:341.52px;font-size:11.1px;line-height:11.1px;color:#4e4e4e;font-weight:normal;white-space:nowrap;">Reseller Account Welcome Email</div>
<div style="position:absolute;left:900.00px;top:347.00px;width:3.00px;height:1.00px;background:#555"></div>
<svg style="position:absolute;left:969.30px;top:341.12px" width="14" height="13" viewBox="0 0 14 13"><rect x="1.2" y="2.7" width="11.4" height="7.7" fill="#e4f1fc" stroke="#6ea3da" stroke-width="1"/><path d="M1.5 3 L6.9 7.3 L12.3 3" fill="none" stroke="#a9cdf0" stroke-width=".7"/><path d="M3.9 9.6 L4.9 6.6 L10.6 1 L12.8 3.1 L7.1 8.7z" fill="#f4cf4c" stroke="#d59a32" stroke-width=".6"/><path d="M10.6 1 L11.4 0.3 L13.5 2.4 L12.8 3.1z" fill="#f0a878"/><path d="M3.9 9.6 L4.5 7.8 L5.8 9z" fill="#6b3a18"/></svg>
<div style="position:absolute;left:597.80px;top:378.00px;width:16.20px;height:1.00px;background:#e8e8e8"></div>
<div style="position:absolute;left:615.10px;top:378.00px;width:281.90px;height:1.00px;background:#e8e8e8"></div>
<div style="position:absolute;left:898.70px;top:378.00px;width:68.00px;height:1.00px;background:#e8e8e8"></div>
<div style="position:absolute;left:968.00px;top:378.00px;width:16.00px;height:1.00px;background:#e8e8e8"></div>
<div style="position:absolute;left:985.20px;top:378.00px;width:14.80px;height:1.00px;background:#e8e8e8"></div>
<svg style="position:absolute;left:600.20px;top:362.45px" width="12" height="12" viewBox="0 0 12 12"><circle cx="6" cy="6" r="5.6" fill="#58b055"/><circle cx="6" cy="6" r="4.7" fill="#72c46c"/><path d="M3.6 6.3 L5.3 7.8 L8.5 4.6" fill="none" stroke="#fff" stroke-width="1.4"/></svg>
<div style="position:absolute;left:617.80px;top:362.85px;font-size:11.1px;line-height:11.1px;color:#4e4e4e;font-weight:normal;white-space:nowrap;">Service Suspension Notification</div>
<div style="position:absolute;left:900.00px;top:368.00px;width:3.00px;height:1.00px;background:#555"></div>
<svg style="position:absolute;left:969.30px;top:362.45px" width="14" height="13" viewBox="0 0 14 13"><rect x="1.2" y="2.7" width="11.4" height="7.7" fill="#e4f1fc" stroke="#6ea3da" stroke-width="1"/><path d="M1.5 3 L6.9 7.3 L12.3 3" fill="none" stroke="#a9cdf0" stroke-width=".7"/><path d="M3.9 9.6 L4.9 6.6 L10.6 1 L12.8 3.1 L7.1 8.7z" fill="#f4cf4c" stroke="#d59a32" stroke-width=".6"/><path d="M10.6 1 L11.4 0.3 L13.5 2.4 L12.8 3.1z" fill="#f0a878"/><path d="M3.9 9.6 L4.5 7.8 L5.8 9z" fill="#6b3a18"/></svg>
<div style="position:absolute;left:597.80px;top:399.00px;width:16.20px;height:1.00px;background:#e8e8e8"></div>
<div style="position:absolute;left:615.10px;top:399.00px;width:281.90px;height:1.00px;background:#e8e8e8"></div>
<div style="position:absolute;left:898.70px;top:399.00px;width:68.00px;height:1.00px;background:#e8e8e8"></div>
<div style="position:absolute;left:968.00px;top:399.00px;width:16.00px;height:1.00px;background:#e8e8e8"></div>
<div style="position:absolute;left:985.20px;top:399.00px;width:14.80px;height:1.00px;background:#e8e8e8"></div>
<svg style="position:absolute;left:600.20px;top:383.78px" width="12" height="12" viewBox="0 0 12 12"><circle cx="6" cy="6" r="5.6" fill="#58b055"/><circle cx="6" cy="6" r="4.7" fill="#72c46c"/><path d="M3.6 6.3 L5.3 7.8 L8.5 4.6" fill="none" stroke="#fff" stroke-width="1.4"/></svg>
<div style="position:absolute;left:617.80px;top:384.18px;font-size:11.1px;line-height:11.1px;color:#4e4e4e;font-weight:normal;white-space:nowrap;">Service Unsuspension Notification</div>
<div style="position:absolute;left:900.00px;top:390.00px;width:3.00px;height:1.00px;background:#555"></div>
<svg style="position:absolute;left:969.30px;top:383.78px" width="14" height="13" viewBox="0 0 14 13"><rect x="1.2" y="2.7" width="11.4" height="7.7" fill="#e4f1fc" stroke="#6ea3da" stroke-width="1"/><path d="M1.5 3 L6.9 7.3 L12.3 3" fill="none" stroke="#a9cdf0" stroke-width=".7"/><path d="M3.9 9.6 L4.9 6.6 L10.6 1 L12.8 3.1 L7.1 8.7z" fill="#f4cf4c" stroke="#d59a32" stroke-width=".6"/><path d="M10.6 1 L11.4 0.3 L13.5 2.4 L12.8 3.1z" fill="#f0a878"/><path d="M3.9 9.6 L4.5 7.8 L5.8 9z" fill="#6b3a18"/></svg>
<div style="position:absolute;left:597.80px;top:420.00px;width:16.20px;height:1.00px;background:#e8e8e8"></div>
<div style="position:absolute;left:615.10px;top:420.00px;width:281.90px;height:1.00px;background:#e8e8e8"></div>
<div style="position:absolute;left:898.70px;top:420.00px;width:68.00px;height:1.00px;background:#e8e8e8"></div>
<div style="position:absolute;left:968.00px;top:420.00px;width:16.00px;height:1.00px;background:#e8e8e8"></div>
<div style="position:absolute;left:985.20px;top:420.00px;width:14.80px;height:1.00px;background:#e8e8e8"></div>
<svg style="position:absolute;left:600.20px;top:405.11px" width="12" height="12" viewBox="0 0 12 12"><circle cx="6" cy="6" r="5.6" fill="#58b055"/><circle cx="6" cy="6" r="4.7" fill="#72c46c"/><path d="M3.6 6.3 L5.3 7.8 L8.5 4.6" fill="none" stroke="#fff" stroke-width="1.4"/></svg>
<div style="position:absolute;left:617.80px;top:405.51px;font-size:11.1px;line-height:11.1px;color:#4e4e4e;font-weight:normal;white-space:nowrap;">SHOUTcast Welcome Email</div>
<div style="position:absolute;left:900.00px;top:411.00px;width:3.00px;height:1.00px;background:#555"></div>
<svg style="position:absolute;left:969.30px;top:405.11px" width="14" height="13" viewBox="0 0 14 13"><rect x="1.2" y="2.7" width="11.4" height="7.7" fill="#e4f1fc" stroke="#6ea3da" stroke-width="1"/><path d="M1.5 3 L6.9 7.3 L12.3 3" fill="none" stroke="#a9cdf0" stroke-width=".7"/><path d="M3.9 9.6 L4.9 6.6 L10.6 1 L12.8 3.1 L7.1 8.7z" fill="#f4cf4c" stroke="#d59a32" stroke-width=".6"/><path d="M10.6 1 L11.4 0.3 L13.5 2.4 L12.8 3.1z" fill="#f0a878"/><path d="M3.9 9.6 L4.5 7.8 L5.8 9z" fill="#6b3a18"/></svg>
<div style="position:absolute;left:597.50px;top:433.68px;font-size:12.9px;line-height:12.9px;color:#333;font-weight:normal;white-space:nowrap;">Domain Messages</div>
<svg style="position:absolute;left:900px;top:426px" width="124" height="28" viewBox="900 426 124 28">
<path d="M919.5 433.8 C912 434.5 908 437.5 908.3 441.3 C908.6 445 912.5 448 918.8 448.7 C913.8 447.6 910.4 444.8 910.4 441.3 C910.4 437.8 913.8 435 919.5 433.8Z" fill="#22408e"/>
<path d="M926.3 434.3 C919 435 915 437.8 915.2 441.4 C915.4 445 919.3 447.6 925.3 448.1 C920.7 447.1 917.3 444.6 917.3 441.4 C917.3 438.2 920.7 435.6 926.3 434.3Z" fill="#22408e"/>
<text x="927.2" y="448.1" font-family="Liberation Sans" font-size="19.5" fill="#a9adb4" textLength="27" lengthAdjust="spacingAndGlyphs">inter</text>
<path d="M966.6 432.2 C962 433.4 959.3 435.5 959.8 438.1 C960.3 440.6 963.8 441.6 964.2 444.1 C964.7 447.5 960 450.4 954.6 452.4 C961 451.4 966.6 448.6 966.4 444.2 C966.2 440.8 962.2 440 961.8 437.8 C961.4 435.5 963.6 433.5 966.6 432.2Z" fill="#22408e"/>
<text x="967" y="448.1" font-family="Liberation Sans" font-size="19.5" fill="#a9adb4" textLength="35.5" lengthAdjust="spacingAndGlyphs">erver</text>
<text x="1002.8" y="448.5" font-family="Liberation Sans" font-weight="bold" font-size="7" fill="#22408e" textLength="9.5" lengthAdjust="spacingAndGlyphs">.net</text>
</svg>
</body></html>
